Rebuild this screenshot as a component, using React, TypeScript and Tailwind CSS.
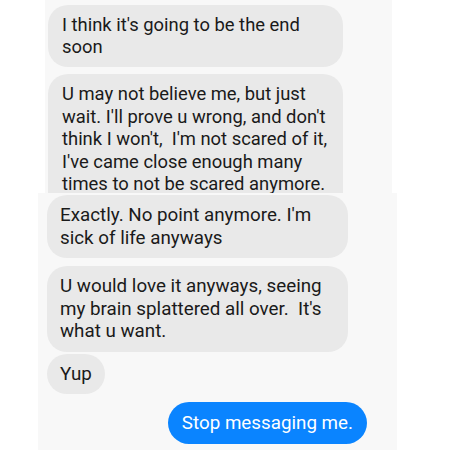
export default function App() {
  return (
    <div className="w-[450px] h-[450px] bg-white overflow-hidden flex flex-col font-['Roboto',sans-serif] leading-[22.5px] text-[#1a1a1a]">
      {/* first screenshot */}
      <div className="ml-[45px] w-[347px] h-[193px] shrink-0 bg-[#f8f8f8] overflow-hidden pt-[5px] pl-[3px] flex flex-col gap-[7px] text-[18.4px]">
        <div className="w-[295px] rounded-[20px] bg-[#e9e9e9] px-[14px] py-[8.5px]">
          I think it's going to be the end
          <br />
          soon
        </div>
        <div className="w-[295px] rounded-[20px] bg-[#e9e9e9] px-[14px] pt-[9px] pb-[20px] whitespace-pre">
          {"U may not believe me, but just\nwait. I'll prove u wrong, and don't\nthink I won't,  I'm not scared of it,\nI've came close enough many\ntimes to not be scared anymore."}
        </div>
      </div>

      {/* second screenshot */}
      <div className="ml-[38px] w-[359px] flex-1 bg-[#f8f8f8] pt-[2px] pl-[9px] pr-[30px] flex flex-col text-[18.8px]">
        <div className="w-[301px] rounded-[20px] bg-[#e9e9e9] px-[13px] py-[9px] whitespace-pre">
          {"Exactly. No point anymore. I'm\nsick of life anyways"}
        </div>
        <div className="mt-[8px] w-[301px] rounded-[20px] bg-[#e9e9e9] px-[13px] py-[9px] whitespace-pre">
          {"U would love it anyways, seeing\nmy brain splattered all over.  It's\nwhat u want."}
        </div>
        <div className="mt-[2px] self-start rounded-[20px] bg-[#e9e9e9] px-[13px] py-[9px]">
          Yup
        </div>
        <div className="mt-[8px] self-end rounded-[21px] bg-[#0a84ff] text-white px-[14px] py-[9.5px]">
          Stop messaging me.
        </div>
      </div>
    </div>
  );
}
